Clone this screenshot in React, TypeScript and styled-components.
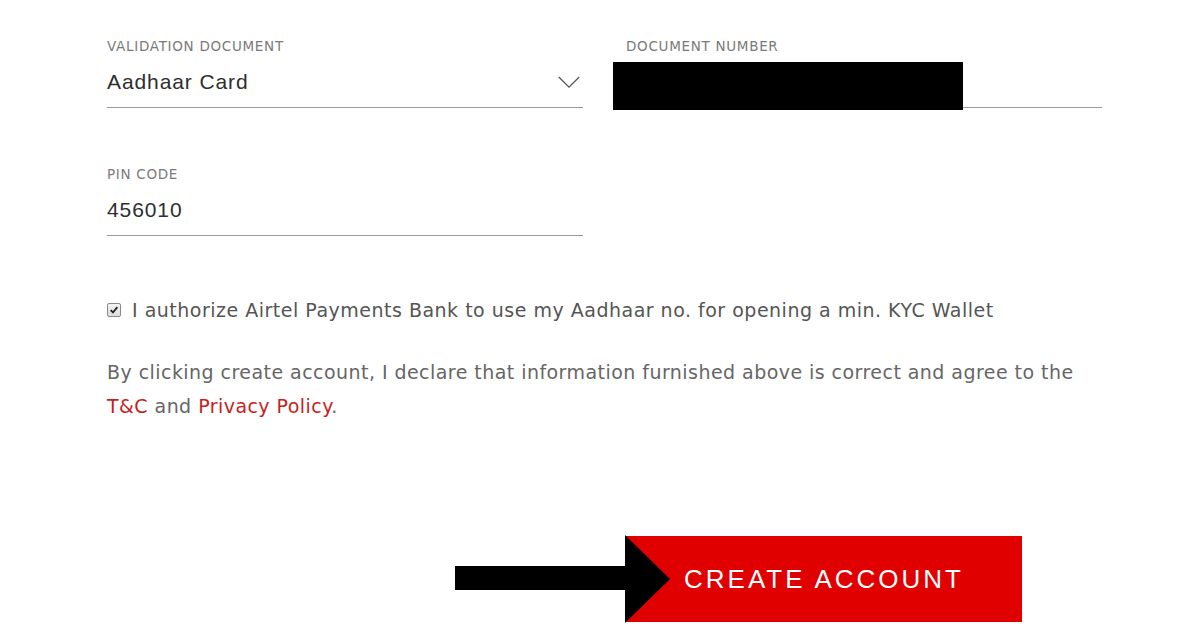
import React, { useState } from 'react';
import styled, { createGlobalStyle } from 'styled-components';

const GlobalStyle = createGlobalStyle`
    html, body {
        margin: 0;
        padding: 0;
        background: #fff;
    }
    body {
        font-family: 'DejaVu Sans', 'Liberation Sans', sans-serif;
    }
`;

const App: React.FC = () => {
    const [authorized, setAuthorized] = useState(true);

    return (
        <Page>
            <GlobalStyle />
            <FieldGrid>
                <Field>
                    <Label>Validation Document</Label>
                    <ValueRow>
                        <Value>Aadhaar Card</Value>
                        <Chevron viewBox="0 0 24 14" aria-hidden>
                            <path d="M1 1 L12 12 L23 1" />
                        </Chevron>
                    </ValueRow>
                </Field>
                <Field>
                    <Label>Document Number</Label>
                    <ValueRow>
                        <Value />
                        <Redaction />
                    </ValueRow>
                </Field>
                <Field>
                    <Label>Pin Code</Label>
                    <ValueRow>
                        <Value>456010</Value>
                    </ValueRow>
                </Field>
            </FieldGrid>

            <ConsentRow onClick={() => setAuthorized(!authorized)}>
                <CheckBox>
                    {authorized && (
                        <svg viewBox="0 0 12 12" width="10" height="10">
                            <path
                                d="M2 6.2 L4.8 9 L10 2.6"
                                fill="none"
                                stroke="#222"
                                strokeWidth="2.2"
                            />
                        </svg>
                    )}
                </CheckBox>
                <ConsentText>
                    I authorize Airtel Payments Bank to use my Aadhaar no. for
                    opening a min. KYC Wallet
                </ConsentText>
            </ConsentRow>

            <Declaration>
                By clicking create account, I declare that information
                furnished above is correct and agree to the
                <br />
                <Link>T&amp;C</Link> and <Link>Privacy Policy</Link>.
            </Declaration>

            <Actions>
                <ButtonWrap>
                    <Arrow viewBox="0 0 215 88" aria-hidden>
                        <rect x="0" y="31" width="175" height="24" />
                        <polygon points="170,0 215,44 170,88" />
                    </Arrow>
                    <CreateButton type="button">Create Account</CreateButton>
                </ButtonWrap>
            </Actions>
        </Page>
    );
};

const Page = styled.main`
    width: 1200px;
    height: 628px;
    box-sizing: border-box;
    padding: 38px 0 0 107px;
    overflow: hidden;
`;

const FieldGrid = styled.div`
    display: grid;
    grid-template-columns: 476px 476px;
    column-gap: 43px;
    row-gap: 58px;
`;

const Field = styled.div`
    display: flex;
    flex-direction: column;
`;

const Label = styled.label`
    font-family: 'DejaVu Sans', sans-serif;
    font-size: 13.5px;
    line-height: 16px;
    color: #7a7a7a;
    text-transform: uppercase;
    letter-spacing: 0.7px;
    margin-bottom: 8px;
`;

const ValueRow = styled.div`
    position: relative;
    height: 46px;
    display: flex;
    align-items: center;
    justify-content: space-between;
    padding-bottom: 5px;
    box-sizing: border-box;
    border-bottom: 1px solid #9a9a9a;
`;

const Value = styled.span`
    font-family: 'Liberation Sans', Arial, sans-serif;
    font-size: 21px;
    color: #2e2e2e;
    letter-spacing: 0.9px;
`;

const Chevron = styled.svg`
    width: 24px;
    height: 13px;
    margin-right: 2px;
    fill: none;
    stroke: #555;
    stroke-width: 1.4;
`;

const Redaction = styled.div`
    position: absolute;
    left: -13px;
    top: 0;
    width: 350px;
    height: 48px;
    background: #000;
`;

const ConsentRow = styled.div`
    display: flex;
    align-items: center;
    gap: 11px;
    margin-top: 61px;
    cursor: pointer;
`;

const CheckBox = styled.span`
    width: 14px;
    height: 14px;
    box-sizing: border-box;
    border: 1px solid #8a8a8a;
    border-radius: 2px;
    background: linear-gradient(#f4f4f4, #dcdcdc);
    display: flex;
    align-items: center;
    justify-content: center;
`;

const ConsentText = styled.span`
    font-family: 'DejaVu Sans', sans-serif;
    font-size: 19px;
    line-height: 26px;
    letter-spacing: 0.5px;
    color: #555;
`;

const Declaration = styled.p`
    margin: 32px 0 0;
    font-family: 'DejaVu Sans', sans-serif;
    font-size: 19px;
    line-height: 34px;
    letter-spacing: 0.45px;
    color: #666;
`;

const Link = styled.a`
    color: #c81e1e;
    cursor: pointer;
`;

const Actions = styled.div`
    display: flex;
    padding-left: 519px;
    margin-top: 113px;
`;

const ButtonWrap = styled.div`
    position: relative;
`;

const CreateButton = styled.button`
    width: 396px;
    height: 86px;
    border: none;
    background: #e10000;
    color: #fff;
    font-family: 'Liberation Sans', Arial, sans-serif;
    font-size: 26px;
    letter-spacing: 3px;
    text-transform: uppercase;
    padding: 0;
    cursor: pointer;
`;

const Arrow = styled.svg`
    position: absolute;
    left: -171px;
    top: -1px;
    width: 215px;
    height: 88px;
    fill: #000;
    z-index: 1;
`;

export default App;
